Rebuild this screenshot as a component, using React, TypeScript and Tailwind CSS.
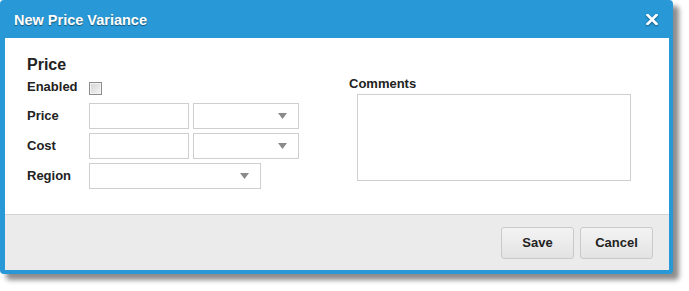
import React from "react";

const Arrow = () => (
  <svg width="9" height="6" viewBox="0 0 9 6" className="shrink-0">
    <path d="M0 0 H9 L4.5 6 Z" fill="#8a8a8a" />
  </svg>
);

const Select = ({ w }: { w: string }) => (
  <div className={`${w} h-[26px] border border-[#cfcfcf] bg-white flex items-center justify-end pr-[11px]`}>
    <Arrow />
  </div>
);

const TextInput = () => <div className="w-[100px] h-[26px] border border-[#cfcfcf] bg-white" />;

export default function App() {
  return (
    <div className="w-[689px] h-[291px] bg-white font-['Liberation_Sans',Arial,sans-serif] text-[#222]">
      <div className="w-[673px] h-[274px] bg-[#2899d6] rounded-[4px] flex flex-col shadow-[6px_6px_5px_rgba(0,0,0,0.45)]">
        <div className="h-[38px] flex items-center justify-between pl-[14px] pr-[15px] shrink-0">
          <span className="text-white font-bold text-[14.5px] leading-[17px] mt-[2px] [text-shadow:0_1px_1px_rgba(0,0,0,0.45)]">
            New Price Variance
          </span>
          <svg width="12" height="11" viewBox="0 0 12 11" className="mt-[1px] drop-shadow-[0_1px_1px_rgba(0,0,0,0.4)]">
            <path d="M1.5 1 L10.5 10 M10.5 1 L1.5 10" stroke="#fff" strokeWidth="2.6" strokeLinecap="square" />
          </svg>
        </div>
        <div className="ml-[5px] mr-[4px] flex flex-col bg-white">
          <div className="h-[176px] flex pl-[22px]">
            <div className="w-[322px] pt-[17px] flex flex-col">
              <div className="text-[16px] leading-[19px] font-bold">Price</div>
              <div className="flex items-center mt-[5px] h-[15px]">
                <span className="w-[62px] text-[13px] leading-[15px] font-bold">Enabled</span>
                <div className="w-[13px] h-[13px] mt-[3px] border border-[#8d8d8d] bg-[linear-gradient(135deg,#d4d4d4,#f4f4f4)] shadow-[inset_0_0_0_1px_#f2f2f2]" />
              </div>
              <div className="flex flex-col gap-[4px] mt-[9px]">
                <div className="flex items-center">
                  <span className="w-[62px] text-[13px] font-bold">Price</span>
                  <TextInput />
                  <div className="w-[4px]" />
                  <Select w="w-[106px]" />
                </div>
                <div className="flex items-center">
                  <span className="w-[62px] text-[13px] font-bold">Cost</span>
                  <TextInput />
                  <div className="w-[4px]" />
                  <Select w="w-[106px]" />
                </div>
                <div className="flex items-center">
                  <span className="w-[62px] text-[13px] font-bold">Region</span>
                  <Select w="w-[172px]" />
                </div>
              </div>
            </div>
            <div className="pt-[38px] flex flex-col">
              <div className="text-[13px] leading-[15px] font-bold">Comments</div>
              <div className="ml-[8px] mt-[3px] w-[274px] h-[87px] border border-[#cfcfcf] bg-white" />
            </div>
          </div>
          <div className="h-[56px] border-t border-[#d4d4d4] bg-[#ebebeb] flex items-center justify-end gap-[6px] pr-[16px] pt-[1px]">
            <button className="w-[73px] h-[32px] rounded-[3px] border border-[#c9c9c9] bg-[linear-gradient(#f3f3f3,#e3e3e3)] text-[13px] font-bold text-[#222]">
              Save
            </button>
            <button className="w-[73px] h-[32px] rounded-[3px] border border-[#c9c9c9] bg-[linear-gradient(#f3f3f3,#e3e3e3)] text-[13px] font-bold text-[#222]">
              Cancel
            </button>
          </div>
        </div>
      </div>
    </div>
  );
}
